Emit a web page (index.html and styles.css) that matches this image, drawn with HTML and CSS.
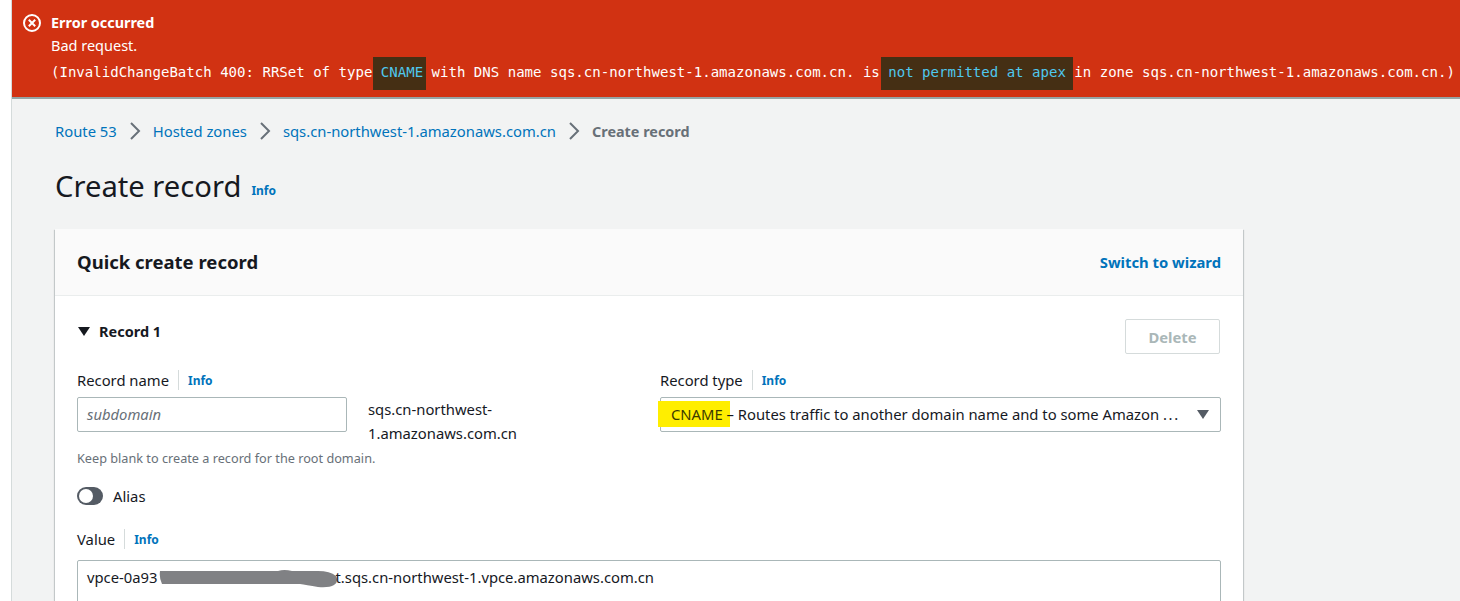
FILE: index.html
```html
<!DOCTYPE html>
<html lang="en">
<head>
  <meta charset="UTF-8">
  <title>Route 53 | Create record</title>
  <link rel="stylesheet" href="styles.css">
</head>
<body>
  <div class="page">
    <div class="flash">
      <svg class="flash-icon" width="20" height="20" viewBox="0 0 20 20" fill="none" stroke="#fff" stroke-width="2">
        <circle cx="10" cy="10" r="8"/>
        <path d="M6.8 6.8l6.4 6.4M13.2 6.8l-6.4 6.4"/>
      </svg>
      <div class="flash-body">
        <div class="flash-title">Error occurred</div>
        <div class="flash-line">Bad request.</div>
        <div class="flash-code">(InvalidChangeBatch 400: RRSet of type <span class="mark mark-cname">CNAME</span> with DNS name sqs.cn-northwest-1.amazonaws.com.cn. is <span class="mark mark-apex">not permitted at apex</span> in zone sqs.cn-northwest-1.amazonaws.com.cn.)</div>
      </div>
    </div>

    <div class="content">
      <nav class="crumbs">
        <a href="#">Route 53</a>
        <svg class="crumb-sep" width="12" height="18" viewBox="0 0 12 18" fill="none" stroke="#687078" stroke-width="2"><path d="M2 1l8 8-8 8"/></svg>
        <a href="#">Hosted zones</a>
        <svg class="crumb-sep" width="12" height="18" viewBox="0 0 12 18" fill="none" stroke="#687078" stroke-width="2"><path d="M2 1l8 8-8 8"/></svg>
        <a href="#">sqs.cn-northwest-1.amazonaws.com.cn</a>
        <svg class="crumb-sep" width="12" height="18" viewBox="0 0 12 18" fill="none" stroke="#687078" stroke-width="2"><path d="M2 1l8 8-8 8"/></svg>
        <span class="crumb-current">Create record</span>
      </nav>

      <div class="page-title">
        <h1>Create record</h1>
        <a class="info" href="#">Info</a>
      </div>

      <section class="card">
        <header class="card-head">
          <h2>Quick create record</h2>
          <a class="wizard" href="#">Switch to wizard</a>
        </header>
        <div class="card-body">
          <div class="record-head">
            <div class="record-title"><span class="caret"></span>Record 1</div>
            <button class="delete">Delete</button>
          </div>

          <div class="fields">
            <div class="field-name">
              <div class="label"><span>Record name</span><a class="info" href="#">Info</a></div>
              <div class="name-row">
                <div class="input"><em>subdomain</em></div>
                <div class="zone">sqs.cn-northwest-1.amazonaws.com.cn</div>
              </div>
              <div class="hint">Keep blank to create a record for the root domain.</div>
            </div>
            <div class="field-type">
              <div class="label"><span>Record type</span><a class="info" href="#">Info</a></div>
              <div class="select">
                <span class="select-text"><span class="yellow">CNAME</span> – Routes traffic to another domain name and to some Amazon <span class="dots">...</span></span>
                <span class="select-caret"></span>
              </div>
            </div>
          </div>

          <div class="alias">
            <span class="toggle"><span class="knob"></span></span>
            <span>Alias</span>
          </div>

          <div class="label label-value"><span>Value</span><a class="info" href="#">Info</a></div>
          <div class="textarea">vpce-0a93<span class="redact"><svg width="182" height="20" viewBox="0 0 182 20"><path d="M2 3h118q6-2 14 0h26q12 0 18 5q3 6-2 9q-5 3-16 2q-12-2-18-3H4q-3-6-2-13z" fill="#808184"/></svg></span>t.sqs.cn-northwest-1.vpce.amazonaws.com.cn</div>
        </div>
      </section>
    </div>
  </div>
</body>
</html>
```

FILE: styles.css
```css
html, body {
  height: 601px;
  overflow: hidden;
}
body {
  margin: 0;
  background: #fff;
  font-family: "Noto Sans", sans-serif;
  font-size: 14.8px;
  color: #16191f;
}
a {
  color: #0073bb;
  text-decoration: none;
}
.page {
  margin-left: 11px;
  height: 601px;
  overflow: hidden;
  background: #f2f3f3;
  border-left: 1px solid #d5dbdb;
}
.flash {
  display: flex;
  margin-left: -1px;
  padding: 13px 0 0 11px;
  height: 84px;
  background: #d13212;
  border-bottom: 2px solid #95a5a6;
  color: #fff;
}
.flash-icon {
  flex: none;
}
.flash-body {
  margin-left: 9px;
  white-space: nowrap;
}
.flash-title {
  font-size: 14.4px;
  font-weight: 700;
  line-height: 20px;
}
.flash-line {
  font-size: 14.5px;
  line-height: 25px;
}
.flash-code {
  margin-top: 2px;
  font-family: "DejaVu Sans Mono", monospace;
  font-size: 14.05px;
  line-height: 25px;
}
.mark {
  padding: 7px 3px 10px 8px;
  background: #452f14;
  color: #4fc8ee;
}
.mark-cname {
  margin: 0 -3px 0 -8px;
}
.mark-apex {
  margin: 0 -7px;
  padding-left: 7px;
  padding-right: 7px;
}
.content {
  padding: 20px 0 0 43px;
}
.crumbs {
  display: flex;
  align-items: center;
  gap: 12px;
  height: 24px;
}
.crumb-current {
  color: #687078;
  font-size: 14.4px;
  font-weight: 700;
}
.page-title {
  display: flex;
  align-items: center;
  gap: 10px;
  margin-top: 23px;
}
.page-title .info {
  margin-top: 9px;
}
h1 {
  margin: 0;
  font-size: 29.2px;
  font-weight: 400;
  line-height: 40px;
}
.info {
  font-size: 12px;
  font-weight: 700;
}
.card {
  width: 1188px;
  margin-top: 23px;
  background: #fff;
  box-shadow: 0 1px 1px 0 rgba(0, 28, 36, .3), 1px 1px 1px 0 rgba(0, 28, 36, .15), -1px 1px 1px 0 rgba(0, 28, 36, .15);
}
.card-head {
  display: flex;
  align-items: center;
  justify-content: space-between;
  height: 66px;
  padding: 0 22px;
  background: #fafafa;
  border-bottom: 1px solid #eaeded;
}
h2 {
  margin: 0 0 1px;
  font-size: 18.5px;
  font-weight: 700;
}
.wizard {
  font-weight: 700;
}
.card-body {
  padding: 23px 22px 0;
}
.record-head {
  display: flex;
  justify-content: space-between;
  height: 35px;
}
.record-title {
  display: flex;
  align-items: center;
  height: 24px;
  font-size: 14.5px;
  font-weight: 700;
}
.caret {
  width: 0;
  height: 0;
  margin: 0 9px 0 1px;
  border-left: 6px solid transparent;
  border-right: 6px solid transparent;
  border-top: 9px solid #16191f;
}
.delete {
  width: 95px;
  height: 35px;
  margin-right: 1px;
  padding: 0;
  background: #fff;
  border: 1px solid #d5dbdb;
  border-radius: 2px;
  color: #aab7b8;
  font: 700 14.8px "Noto Sans", sans-serif;
}
.fields {
  display: flex;
  justify-content: space-between;
  margin-top: 16px;
}
.label {
  display: flex;
  align-items: center;
  height: 20px;
  margin-bottom: 7px;
}
.label .info {
  margin-left: 9px;
  padding: 2px 0 0 9px;
  border-left: 1px solid #d5dbdb;
  line-height: 18px;
}
.label-value {
  margin-bottom: 11px;
}
.name-row {
  display: flex;
  align-items: flex-start;
}
.input {
  box-sizing: border-box;
  width: 270px;
  height: 35px;
  padding: 0 9px;
  background: #fff;
  border: 1px solid #aab7b8;
  border-radius: 2px;
  line-height: 33px;
}
.input em {
  color: #687078;
}
.zone {
  width: 160px;
  margin: 0 0 0 21px;
  line-height: 24px;
}
.hint {
  margin-top: 5px;
  font-size: 12.7px;
  line-height: 16px;
  color: #687078;
}
.field-type {
  width: 561px;
}
.select {
  box-sizing: border-box;
  display: flex;
  align-items: center;
  justify-content: space-between;
  height: 35px;
  padding: 0 11px 1px 10px;
  background: #fff;
  border: 1px solid #aab7b8;
  border-radius: 2px;
  white-space: nowrap;
}
.yellow {
  margin: 0 -7px 0 -13px;
  padding: 3px 7px 3px 13px;
  background: #ffee00;
  color: #3b3a00;
}
.dots {
  letter-spacing: 1.6px;
}
.select-caret {
  width: 0;
  height: 0;
  border-left: 6px solid transparent;
  border-right: 6px solid transparent;
  border-top: 9px solid #545b64;
}
.alias {
  display: flex;
  align-items: center;
  gap: 10px;
  height: 20px;
  margin: 20px 0 23px;
}
.toggle {
  box-sizing: border-box;
  display: block;
  width: 26px;
  height: 18px;
  padding: 2px;
  background: #545b64;
  border-radius: 9px;
}
.knob {
  display: block;
  width: 14px;
  height: 14px;
  background: #fff;
  border-radius: 50%;
}
.textarea {
  box-sizing: border-box;
  width: 1144px;
  height: 80px;
  padding: 6px 9px;
  background: #fff;
  border: 1px solid #aab7b8;
  border-radius: 2px;
}
.redact {
  display: inline-block;
  width: 178px;
  height: 20px;
  vertical-align: top;
  margin-top: 1px;
}
```
